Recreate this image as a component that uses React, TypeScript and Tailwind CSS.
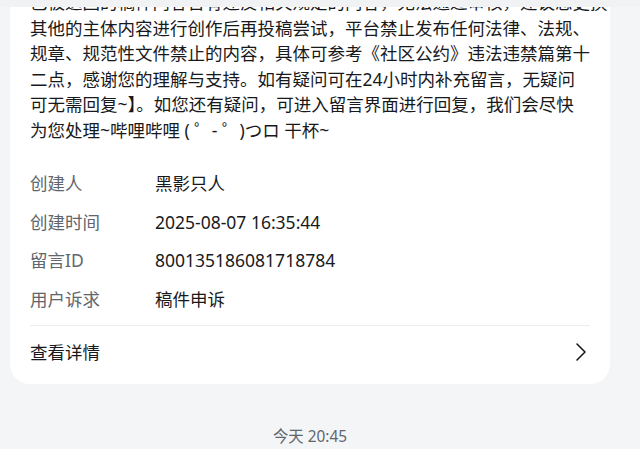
import React from "react";

const rows: [string, string][] = [
  ["创建人", "黑影只人"],
  ["创建时间", "2025-08-07 16:35:44"],
  ["留言ID", "800135186081718784"],
  ["用户诉求", "稿件申诉"],
];

const lines = [
  "已被退回的稿件内容含有违反相关规定的内容，无法通过审核，建议您更换",
  "其他的主体内容进行创作后再投稿尝试，平台禁止发布任何法律、法规、",
  "规章、规范性文件禁止的内容，具体可参考《社区公约》违法违禁篇第十",
  "二点，感谢您的理解与支持。如有疑问可在24小时内补充留言，无疑问",
  "可无需回复~】。如您还有疑问，可进入留言界面进行回复，我们会尽快",
  "为您处理~哔哩哔哩 ( ゜- ゜)つロ 干杯~",
];

export default function App() {
  return (
    <div
      className="relative h-[449px] w-[640px] overflow-hidden bg-[#f4f5f7]"
      style={{ fontFamily: '"Noto Sans", "Noto Sans CJK SC", sans-serif' }}
    >
      <div className="absolute left-0 right-0 top-0 z-10 h-[7px] bg-[#f1f2f3]" />
      <div className="-mt-[30px] w-[620px] px-[10px]">
        <div className="rounded-[20px] bg-white px-[20px] pb-[6px] pt-[20px]">
          <div className="text-[17.5px] leading-[25.5px] text-[#18191c]">
            {lines.map((l, i) => (
              <div key={i} className="whitespace-nowrap">
                {l}
              </div>
            ))}
          </div>
          <div className="mt-[27px] flex flex-col gap-[12.7px]">
            {rows.map(([k, v]) => (
              <div key={k} className="flex text-[17.5px] leading-[26px]">
                <div className="w-[125px] shrink-0 text-[#61666d]">{k}</div>
                <div className="text-[#18191c]">{v}</div>
              </div>
            ))}
          </div>
          <div className="mt-[13px] h-px bg-[#eceef0]" />
          <div className="flex items-center justify-between py-[13px] text-[17.5px] leading-[26px] text-[#18191c]">
            <span>查看详情</span>
            <svg
              width="12"
              height="20"
              viewBox="0 0 12 20"
              fill="none"
              className="mr-[3px]"
            >
              <path
                d="M2 2 L10 10 L2 18"
                stroke="#18191c"
                strokeWidth="1.6"
                strokeLinecap="round"
                strokeLinejoin="round"
              />
            </svg>
          </div>
        </div>
        <div className="mt-[42px] text-center text-[15.4px] leading-[22px] text-[#61666d]">
          今天 20:45
        </div>
      </div>
    </div>
  );
}
